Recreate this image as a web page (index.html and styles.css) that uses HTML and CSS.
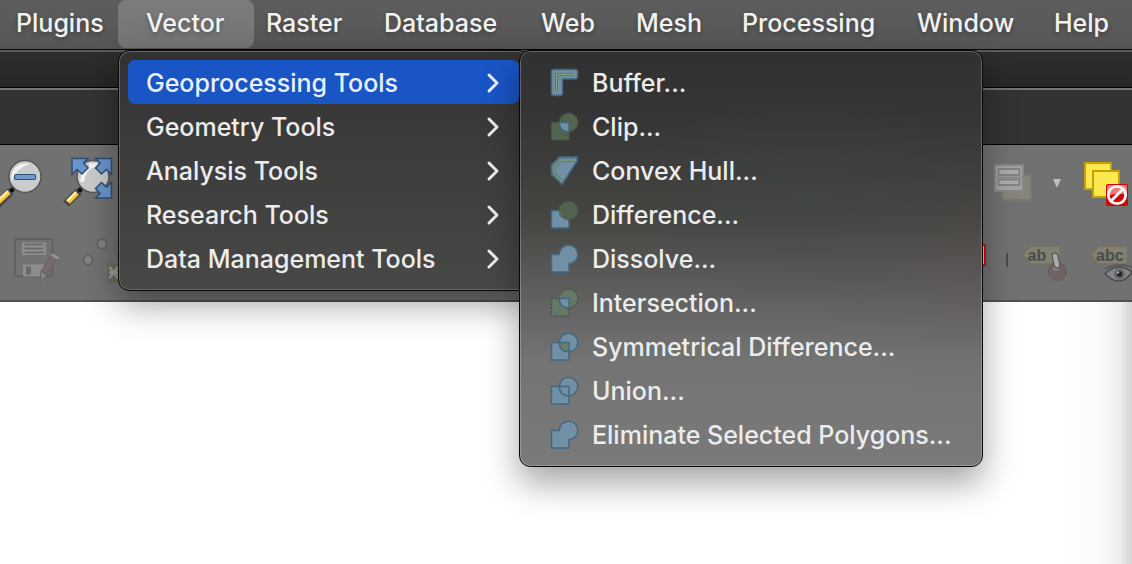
FILE: index.html
```html
<!DOCTYPE html>
<html lang="en">
<head>
<meta charset="utf-8">
<title>QGIS – Vector menu</title>
<link rel="stylesheet" href="styles.css">
</head>
<body>
<div class="screen">
  <nav class="menubar">
    <span>Plugins</span><span class="open">Vector</span><span>Raster</span><span>Database</span><span>Web</span><span>Mesh</span><span>Processing</span><span>Window</span><span>Help</span>
  </nav>
  <div class="titlebar"></div>
  <div class="tabbar"></div>
  <div class="toolbars">
    <div class="row row-nav">
      <svg class="i-zoomout" width="50" height="56" viewBox="0 155 50 56">
        <path d="M-3 205L11 191" stroke="#484848" stroke-width="8"/><path d="M-4 204L9 192" stroke="#fcca32" stroke-width="5"/><path d="M-4 202L8 191" stroke="#fff0c0" stroke-width="2"/>
        <circle cx="12" cy="190" r="2.4" fill="#111"/>
        <circle cx="25" cy="176.500" r="16" fill="#cbcbcb" stroke="#555" stroke-width="1.500"/>
        <path d="M12 181a14 14 0 0 1 18-17q-13 3-18 17z" fill="#f2f2f2"/>
        <rect x="14.500" y="174.500" width="21" height="5" rx="1.500" fill="#6f9bcd" stroke="#2f5379" stroke-width="1.200"/>
      </svg>
      <svg class="i-zoomfull" width="56" height="56" viewBox="62 155 56 56">
        <path d="M66 204L79 191" stroke="#484848" stroke-width="8"/><path d="M68 202L77 193" stroke="#fcca32" stroke-width="5"/><path d="M67 201L76 192" stroke="#fff0c0" stroke-width="2"/>
        <circle cx="80" cy="190" r="2.400" fill="#111"/>
        <circle cx="93" cy="176.500" r="16" fill="#cbcbcb" stroke="#555" stroke-width="1.500"/>
        <path d="M80 182q1-12 9-14v-5l8 0 0 4q-11 1-13 15z" fill="#f2f2f2"/>
        <g fill="#6795c9" stroke="#2f4f72" stroke-width="1.500"><path d="M72 158.500H88L83.500 163L88 168L82 174L77 169.500L72 174.500Z"/><path d="M111.500 158.500H95.500L100 163L95.500 168L101.500 174L106.500 169.500L111.500 174.500Z"/><path d="M111.500 198H95.500L100 193.500L95.500 188.500L101.500 182.500L106.500 187L111.500 182Z"/></g>
      </svg>
      <svg class="i-form push" width="46" height="56" viewBox="990 155 46 56">
        <rect x="1002" y="175" width="29" height="25" fill="#86847b" stroke="#7c786c" stroke-width="2"/>
        <rect x="995" y="165" width="28" height="26" fill="#a1a3a4" stroke="#858788" stroke-width="2"/>
        <g fill="#a9abac" stroke="#7d7f80" stroke-width="1.800"><rect x="998.500" y="169" width="21" height="6"/><rect x="998.500" y="179.500" width="21" height="5.500"/></g>
        <path d="M996 177.500H1022" stroke="#858788" stroke-width="1.500"/>
      </svg>
      <svg class="i-caret" width="12" height="56" viewBox="1051 155 12 56"><path d="M1053 179H1061L1057.500 187H1056.500Z" fill="#bdbdbd"/></svg>
      <svg class="i-deselect" width="52" height="56" viewBox="1080 155 52 56">
        <g fill="#fce94f" stroke="#c4a000" stroke-width="2"><rect x="1085" y="163" width="26" height="26"/><rect x="1093" y="171" width="26" height="26"/></g>
        <rect x="1106" y="184" width="22" height="22" rx="2" fill="#c90808"/><path d="M1107 187q0-2 2-2h16q2 0 2 2v8q-8-3-20 1z" fill="#ee7777"/>
        <circle cx="1117" cy="195" r="8.700" fill="none" stroke="#f3f3f3" stroke-width="2.800"/><path d="M1111 201L1123 189" stroke="#f3f3f3" stroke-width="3"/>
      </svg>
    </div>
    <div class="row row-edit">
      <svg class="i-save" width="52" height="56" viewBox="10 232 52 56">
        <rect x="15" y="239" width="37.500" height="37.500" rx="2.500" fill="#727273" stroke="#606162" stroke-width="1.800"/>
        <rect x="22" y="242.500" width="24" height="12.500" fill="#8d8d8d"/><path d="M24.500 244.500H43.500M24.500 248.500H43.500M24.500 252.500H43.500" stroke="#696969" stroke-width="1.400"/>
        <rect x="23" y="264.500" width="21" height="12" fill="#8d8d8d"/><rect x="26" y="266.500" width="5" height="8" fill="#686868"/>
        <path d="M51.500 254.500L57.500 258L47.500 275L41 271.500Z" fill="#756c69" stroke="#64615f"/><path d="M41 271.500L47.500 275L40 281.500Z" fill="#85827f" stroke="#626262"/><path d="M51.500 254.500L58.500 258.500" stroke="#929292" stroke-width="3"/>
      </svg>
      <svg class="i-nodes" width="40" height="56" viewBox="80 232 40 56">
        <g fill="#80827f" stroke="#62635f" stroke-width="1.800"><circle cx="88" cy="260" r="4.700"/><circle cx="102" cy="244" r="4.700"/><circle cx="120" cy="248" r="4.500"/></g>
        <rect x="107" y="263" width="20" height="20" rx="2" fill="#6b6a5c"/><path d="M109.500 267L118 278M109.500 278L118 267M109 272.500H118" stroke="#9b9b93" stroke-width="2.400"/>
      </svg>
      <svg class="i-red push" width="10" height="56" viewBox="978 232 10 56"><rect x="970" y="245" width="15" height="20" fill="#d5caca" stroke="#e10505" stroke-width="2"/></svg>
      <span class="divider"></span>
      <svg class="i-label" width="50" height="56" viewBox="1020 232 50 56">
        <path d="M1030 246H1060.500V264H1030L1023 255Z" fill="#818071" stroke="#747261" stroke-width="1.600"/><text x="1027.500" y="261" class="tag">ab</text>
        <circle cx="1057.500" cy="271.500" r="9" fill="#6f6262" stroke="#665b5b"/><circle cx="1056" cy="268" r="3" fill="#898080"/>
        <path d="M1055 256L1057 265" stroke="#555" stroke-width="7" stroke-linecap="round"/><path d="M1055 256L1057 265" stroke="#aaa" stroke-width="4.500" stroke-linecap="round"/>
      </svg>
      <svg class="i-label" width="44" height="56" viewBox="1088 232 44 56">
        <path d="M1098 246H1127.500V264H1098L1091 255Z" fill="#818071" stroke="#747261" stroke-width="1.600"/><text x="1096" y="261" class="tag">abc</text>
        <path d="M1105 274Q1117 261 1132 272Q1121 289 1105 274Z" fill="#858585" stroke="#484848" stroke-width="1.500"/><path d="M1105 269Q1117 262 1132 267" fill="none" stroke="#505050" stroke-width="1.300"/><circle cx="1119.500" cy="274" r="5.500" fill="#616970"/><circle cx="1119.500" cy="274" r="2.800" fill="#222"/><circle cx="1118" cy="272.500" r="1.200" fill="#aaa"/>
      </svg>
    </div>
  </div>
  <main class="canvas"></main>

  <ul class="menu menu-vector">
    <li class="active"><span>Geoprocessing Tools</span><svg class="chev" viewBox="0 0 14 22"><path d="M3 3L11 11L3 19"/></svg></li>
    <li><span>Geometry Tools</span><svg class="chev" viewBox="0 0 14 22"><path d="M3 3L11 11L3 19"/></svg></li>
    <li><span>Analysis Tools</span><svg class="chev" viewBox="0 0 14 22"><path d="M3 3L11 11L3 19"/></svg></li>
    <li><span>Research Tools</span><svg class="chev" viewBox="0 0 14 22"><path d="M3 3L11 11L3 19"/></svg></li>
    <li><span>Data Management Tools</span><svg class="chev" viewBox="0 0 14 22"><path d="M3 3L11 11L3 19"/></svg></li>
  </ul>

  <ul class="menu menu-geo">
    <li><svg class="ico" viewBox="0 0 30 30"><path class="blue" d="M3.500 1.500H25q2.500 0 2.500 2.500V8.500q0 2.500-2.500 2.500H12.500V25q0 2.500-2.500 2.500H4q-2.500 0-2.500-2.500V3.500q0-2 2-2z"/><path d="M6.500 23V6.500H23.500" fill="none" stroke="#4b6878" stroke-width="3"/><path d="M6.500 23V6.500H23.500" fill="none" stroke="#86a578" stroke-width="1.300"/></svg><span>Buffer...</span></li>
    <li><svg class="ico" viewBox="0 0 30 30"><g class="green"><rect x="1.500" y="10.500" width="17.500" height="17.500"/><circle cx="18.500" cy="10.500" r="9.300"/></g><path class="blue" d="M9.200 10.500H19V19.800Q9.500 19.500 9.200 10.500Z"/></svg><span>Clip...</span></li>
    <li><svg class="ico" viewBox="0 0 30 30"><path class="blue" d="M9.500 1H27V5L12 28.500L1.500 18.500V9Z"/><path d="M25 4H11L4 11V18L12 25.500" fill="none" stroke="#4b6878" stroke-width="3"/><path d="M25 4H11L4 11V18L12 25.500" fill="none" stroke="#86a578" stroke-width="1.300"/></svg><span>Convex Hull...</span></li>
    <li><svg class="ico" viewBox="0 0 30 30"><rect class="blue" x="1.500" y="10.500" width="17.500" height="17.500"/><circle class="green" cx="18.500" cy="10.500" r="9.300"/></svg><span>Difference...</span></li>
    <li><svg class="ico" viewBox="0 0 30 30"><path class="blue" d="M1.500 10.500H9.200A9.300 9.300 0 1 1 19 19.800V28H1.500Z"/></svg><span>Dissolve...</span></li>
    <li><svg class="ico" viewBox="0 0 30 30"><g class="green light"><rect x="1.500" y="10.500" width="17.500" height="17.500"/><circle cx="18.500" cy="10.500" r="9.300"/></g><path class="blue" d="M9.200 10.500H19V19.800Q9.500 19.500 9.200 10.500Z"/></svg><span>Intersection...</span></li>
    <li><svg class="ico" viewBox="0 0 30 30"><g class="blue"><rect x="1.500" y="10.500" width="17.500" height="17.500"/><circle cx="18.500" cy="10.500" r="9.300"/><path fill="#6f7c66" d="M9.200 10.500H19V19.800Q9.500 19.500 9.200 10.500Z"/></g></svg><span>Symmetrical Difference...</span></li>
    <li><svg class="ico" viewBox="0 0 30 30"><g class="blue"><rect x="1.500" y="10.500" width="17.500" height="17.500"/><circle cx="18.500" cy="10.500" r="9.300"/><path d="M9.200 10.500H19V19.800Q9.500 19.500 9.200 10.500Z"/></g></svg><span>Union...</span></li>
    <li><svg class="ico" viewBox="0 0 30 30"><path class="blue" d="M1.500 10.500H9.200A9.300 9.300 0 1 1 19 19.800V28H1.500Z"/></svg><span>Eliminate Selected Polygons...</span></li>
  </ul>
</div>
</body>
</html>
```
FILE: styles.css
```css
* { box-sizing: border-box; }
body { margin: 0; background: #fff; font-family: Inter, "Liberation Sans", sans-serif; font-weight: 500; }
.screen { position: relative; width: 1132px; height: 564px; overflow: hidden; display: flex; flex-direction: column; }

.menubar { flex: none; height: 50px; padding-left: 16px; display: grid; grid-template-columns: 130px 120px 118px 157px 95px 106px 175px 137px 78px; border-bottom: 1px solid #050505; background: linear-gradient(#5d5d5d, #585858 80%, #545454); color: #f2f2f2; font-size: 25px; line-height: 46px; white-space: nowrap; text-shadow: 0 2px 5px rgba(0,0,0,.3); }
.menubar .open { height: 48px; margin: 0 12px 0 -28px; padding-left: 28px; border-radius: 8px; background: linear-gradient(#7c7c7c, #747474); }

.titlebar { flex: none; height: 38px; border-top: 2px solid #5c5c5c; border-bottom: 1px solid #000; background: linear-gradient(#2d2d2d, #272727); }
.tabbar { flex: none; height: 57px; border-top: 2px solid #747474; border-bottom: 1px solid #000; background: #333; }
.toolbars { flex: none; height: 157px; padding-top: 10px; border-bottom: 2px solid #505050; background: #717171; display: flex; flex-direction: column; gap: 21px; }
.row { display: flex; height: 56px; }
.row svg { flex: none; }
.row .push { margin-left: auto; }
.i-zoomfull { margin-left: 12px; }
.i-caret { margin-left: 15px; }
.i-deselect { margin-left: 17px; }
.i-save { margin-left: 10px; }
.i-nodes { margin-left: 18px; }
.divider { width: 2px; height: 14px; margin: 21px 0 0 18px; background: #4b4b4b; }
.i-label { margin-left: 12px; }
.i-label + .i-label { margin-left: 18px; }
.tag { font: bold 16px "Liberation Sans", sans-serif; fill: #4c4c4c; }
.canvas { flex: 1; background: linear-gradient(to right, transparent 1065px, rgba(0,0,0,.02) 1100px, rgba(0,0,0,.07) 1120px, rgba(0,0,0,.17) 1132px), #fff; }

.menu { position: absolute; top: 50px; margin: 0; padding: 9px; list-style: none; border: 1px solid #080808; border-radius: 11px; color: #ececec; font-size: 25px; white-space: nowrap; }
.menu li { height: 44px; padding-top: 2px; display: flex; align-items: center; }
.menu li span { line-height: 42px; }
.menu-vector { left: 118px; width: 412px; height: 241px; background: linear-gradient(#323232, #3c3c3c 40%, #484846); box-shadow: inset 0 0 0 1px #686868, 0 14px 34px rgba(0,0,0,.36); }
.menu-vector li { width: 391px; padding: 2px 19px 0 18px; border-radius: 7px; justify-content: space-between; }
.menu-vector .active { background: #1955c5; color: #e9f0fc; }
.chev { width: 14px; height: 22px; fill: none; stroke: currentColor; stroke-width: 3; stroke-linecap: round; stroke-linejoin: round; }
.menu-geo { left: 519px; width: 464px; height: 417px; background: radial-gradient(ellipse 170px 120px at 290px 150px, rgba(65,75,85,.28), transparent), radial-gradient(ellipse 170px 130px at 100% 225px, rgba(100,75,75,.2), transparent), linear-gradient(#313131, #353535 15%, #454541 40%, #616161 60%, #747474 75%, #7a7a7a); box-shadow: inset 0 0 0 1px rgba(255,255,255,.24), 0 16px 34px rgba(0,0,0,.36); }
.menu-geo li { padding-left: 21px; }
.ico { width: 30px; height: 30px; margin-right: 12px; }
.blue { fill: #7190a5; stroke: #426883; stroke-width: 1.5; }
.green { fill: #526350; stroke: #4a5a4b; stroke-width: 1.3; stroke-dasharray: 2 1.5; }
.green.light { fill: #657865; stroke: #45524a; }
```
